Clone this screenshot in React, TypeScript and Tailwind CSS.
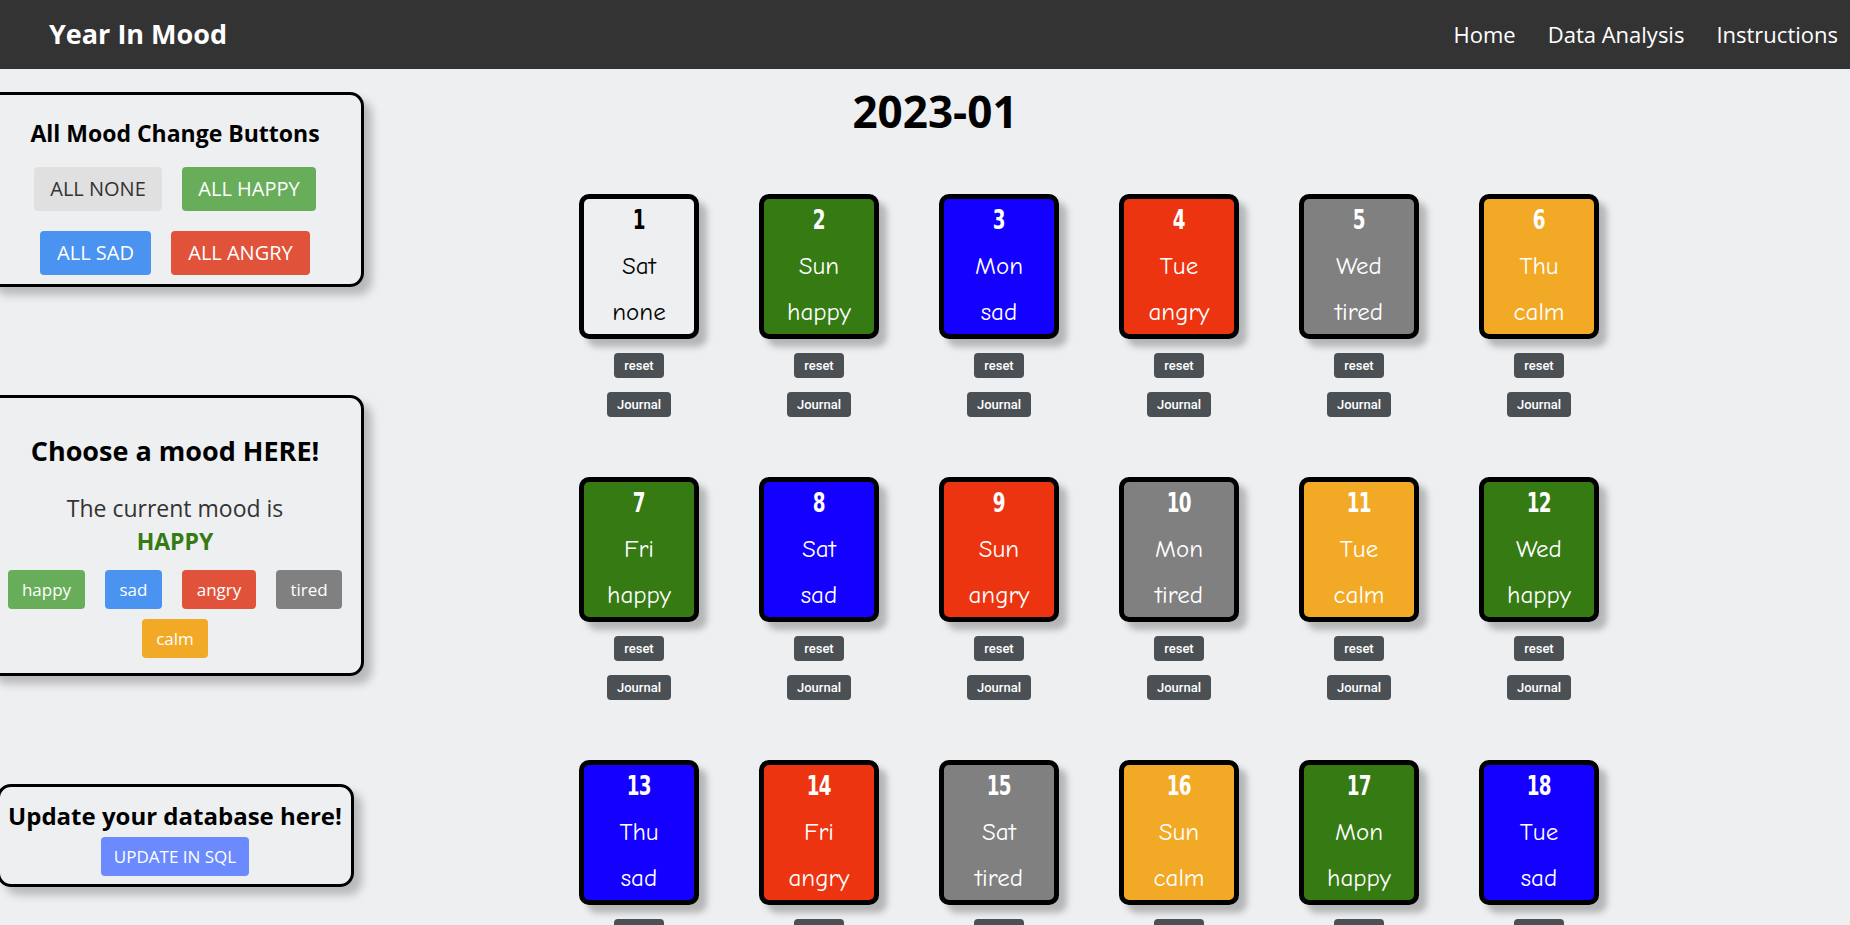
const moodStyles: Record<string, string> = {
  none: "bg-[#eeeff1] text-black",
  happy: "bg-[#367a14] text-white",
  sad: "bg-[#1400ff] text-white",
  angry: "bg-[#ec3410] text-white",
  tired: "bg-[#808080] text-white",
  calm: "bg-[#f2a926] text-white",
};

const moodCycle = ["happy", "sad", "angry", "tired", "calm"];
const weekdays = ["Sun", "Mon", "Tue", "Wed", "Thu", "Fri", "Sat"];

const days = Array.from({ length: 31 }, (_, i) => {
  const d = i + 1;
  return {
    day: d,
    weekday: weekdays[(d + 5) % 7],
    mood: d === 1 ? "none" : moodCycle[(d - 2) % 5],
  };
});

const ui = { fontFamily: '"Segoe UI", "Open Sans", sans-serif' };
const comic = { fontFamily: '"Comic Sans MS", "Comic Neue", Lato, sans-serif' };
const impact = { fontFamily: 'Impact, "DejaVu Sans", sans-serif' };

function DayCard({ day, weekday, mood }: { day: number; weekday: string; mood: string }) {
  return (
    <div className="flex flex-col items-center">
      <div
        className={`w-[120px] h-[145px] border-[5px] border-black rounded-[10px] shadow-[8px_8px_6px_#b5b6b7] flex flex-col items-center overflow-hidden ${moodStyles[mood]}`}
      >
        <div className="h-[36px] leading-[36px] mt-[3px] text-[27px] font-bold scale-x-[0.68] tracking-[-1px]" style={impact}>
          {day}
        </div>
        <div className="h-[46px] leading-[46px] mt-[5px] text-[25px]" style={comic}>
          {weekday}
        </div>
        <div className="h-[46px] leading-[46px] text-[25px]" style={comic}>
          {mood}
        </div>
      </div>
      <button
        className="mt-[14px] h-[25px] w-[50px] rounded-[4px] bg-[#4b5054] text-white text-[13px] font-medium"
        style={{ fontFamily: "Roboto, Arial, sans-serif" }}
      >
        reset
      </button>
      <button
        className="mt-[14px] h-[25px] w-[64px] rounded-[4px] bg-[#4b5054] text-white text-[13px] font-medium"
        style={{ fontFamily: "Roboto, Arial, sans-serif" }}
      >
        Journal
      </button>
    </div>
  );
}

export default function App() {
  return (
    <div className="h-screen overflow-hidden bg-[#eeeff1]" style={ui}>
      {/* navbar */}
      <nav className="h-[69px] bg-[#333333] flex items-center justify-between text-white">
        <div className="ml-[49px] text-[27px] font-bold">Year In Mood</div>
        <div className="flex items-center gap-[32px] mr-[12px] text-[22px]">
          <span>Home</span>
          <span>Data Analysis</span>
          <span>Instructions</span>
        </div>
      </nav>

      <div className="flex">
        {/* sidebar */}
        <aside className="w-[350px] shrink-0 flex flex-col items-center pt-[23px] gap-[108px]">
          <div className="w-[378px] h-[195px] shrink-0 border-[3px] border-black rounded-[14px] shadow-[8px_8px_8px_#b8b9ba] flex flex-col items-center">
            <div className="mt-[23px] h-[30px] leading-[30px] text-[23px] font-bold">All Mood Change Buttons</div>
            <div className="mt-[19px] flex gap-[20px]">
              <button className="h-[44px] w-[128px] rounded-[4px] bg-[#e0e0e0] text-[#333] text-[20px]">ALL NONE</button>
              <button className="h-[44px] w-[134px] rounded-[4px] bg-[#68ad5a] text-white text-[20px]">ALL HAPPY</button>
            </div>
            <div className="mt-[20px] flex gap-[20px]">
              <button className="h-[44px] w-[111px] rounded-[4px] bg-[#4a93f0] text-white text-[20px]">ALL SAD</button>
              <button className="h-[44px] w-[139px] rounded-[4px] bg-[#e0533a] text-white text-[20px]">ALL ANGRY</button>
            </div>
          </div>

          <div className="w-[378px] h-[281px] shrink-0 border-[3px] border-black rounded-[14px] shadow-[8px_8px_8px_#b8b9ba] flex flex-col items-center">
            <div className="mt-[36px] h-[34px] leading-[34px] text-[27px] font-bold">Choose a mood HERE!</div>
            <div className="mt-[25px] h-[30px] leading-[30px] text-[23px] text-[#333]">The current mood is</div>
            <div className="mt-[3px] h-[30px] leading-[30px] text-[23px] font-bold text-[#367a14]">HAPPY</div>
            <div className="mt-[14px] w-[350px] flex flex-wrap justify-center gap-x-[20px] gap-y-[10px]">
              <button className="h-[39px] w-[77px] rounded-[4px] bg-[#68ad5a] text-white text-[17px]">happy</button>
              <button className="h-[39px] w-[57px] rounded-[4px] bg-[#4a93f0] text-white text-[17px]">sad</button>
              <button className="h-[39px] w-[74px] rounded-[4px] bg-[#e0533a] text-white text-[17px]">angry</button>
              <button className="h-[39px] w-[66px] rounded-[4px] bg-[#808080] text-white text-[17px]">tired</button>
              <button className="h-[39px] w-[66px] rounded-[4px] bg-[#f2a926] text-white text-[17px]">calm</button>
            </div>
          </div>

          <div className="w-[357px] h-[103px] shrink-0 border-[3px] border-black rounded-[14px] shadow-[8px_8px_8px_#b8b9ba] flex flex-col items-center">
            <div className="mt-[12px] h-[34px] leading-[34px] text-[24px] font-bold whitespace-nowrap">Update your database here!</div>
            <button className="mt-[4px] h-[39px] w-[148px] rounded-[4px] bg-[#6b8afd] text-white text-[17px]">UPDATE IN SQL</button>
          </div>
        </aside>

        {/* calendar */}
        <main className="flex-1">
          <div className="w-[1170px] mt-[18px] h-[48px] leading-[48px] text-center text-[44px] font-bold">2023-01</div>
          <div className="ml-[229px] mt-[59px] grid grid-cols-[repeat(6,120px)] gap-x-[60px] gap-y-[60px]">
            {days.map((d) => (
              <DayCard key={d.day} {...d} />
            ))}
          </div>
        </main>
      </div>
    </div>
  );
}
